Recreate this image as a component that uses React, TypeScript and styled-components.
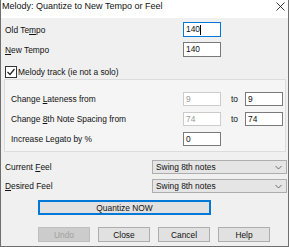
import React from 'react';
import styled, { createGlobalStyle } from 'styled-components';

const GlobalStyle = createGlobalStyle`
  html, body {
    margin: 0;
    padding: 0;
    background: #f0f0f0;
  }
  body {
    font-family: 'Liberation Sans', Arial, sans-serif;
    font-size: 8.4px;
    color: #111;
  }
`;

const Window = styled.div`
  width: 289px;
  height: 247px;
  box-sizing: border-box;
  border: 1px solid #6f6f6f;
  border-top: none;
  background: #f0f0f0;
  display: flex;
  flex-direction: column;
  overflow: hidden;
`;

const TitleBar = styled.div`
  height: 18px;
  flex: none;
  background: #fff;
  display: flex;
  align-items: center;
  justify-content: space-between;
  padding: 0 3px 6px 1px;
  box-sizing: border-box;

  .title {
    font-size: 9px;
    line-height: 12px;
  }
`;

const Body = styled.div`
  flex: 1;
  padding: 4px 2px 0 3px;
  display: flex;
  flex-direction: column;
`;

const FieldRow = styled.div<{ $gap?: number }>`
  display: grid;
  grid-template-columns: 178px 38px;
  align-items: center;
  height: 15px;
  margin-left: 1px;
  margin-bottom: ${({ $gap }) => $gap ?? 0}px;
`;

const Label = styled.span`
  white-space: nowrap;
`;

const U = styled.span`
  text-decoration: underline;
  text-underline-offset: 1px;
`;

const TextBox = styled.div<{ $focus?: boolean; $disabled?: boolean }>`
  box-sizing: border-box;
  height: 100%;
  background: #fff;
  border: 1px solid
    ${({ $focus, $disabled }) =>
      $focus ? '#0078d7' : $disabled ? '#cccccc' : '#7a7a7a'};
  color: ${({ $disabled }) => ($disabled ? '#9a9a9a' : '#111')};
  display: flex;
  align-items: center;
  padding-left: 2px;
  line-height: 1;
`;

const Caret = styled.span`
  display: inline-block;
  width: 1px;
  height: 10px;
  background: #000;
  margin-left: 0.5px;
`;

const CheckRow = styled.label`
  display: flex;
  align-items: center;
  gap: 1px;
  height: 13px;
  margin: 8px 0 1px 1px;
`;

const Group = styled.div`
  box-sizing: border-box;
  width: 282px;
  height: 73px;
  border: 1px solid #dcdcdc;
  background: #f5f5f5;
  padding: 12px 0 0 6px;
  display: flex;
  flex-direction: column;
  gap: 6px;
`;

const GroupRow = styled.div`
  display: grid;
  grid-template-columns: 172px 38px 24px 38px;
  align-items: center;
  height: 14px;

  .to {
    padding-left: 10px;
  }
`;

const SelectRow = styled.div<{ $top: number }>`
  display: grid;
  grid-template-columns: 147px 135px;
  align-items: center;
  height: 14px;
  margin: ${({ $top }) => $top}px 0 0 1px;
`;

const Select = styled.div`
  box-sizing: border-box;
  height: 100%;
  background: #e5e5e5;
  border: 1px solid #adadad;
  display: flex;
  align-items: center;
  justify-content: space-between;
  padding: 0 4px 0 3px;
`;

const Button = styled.div<{ $width: number; $default?: boolean; $disabled?: boolean }>`
  box-sizing: border-box;
  width: ${({ $width }) => $width}px;
  height: 15px;
  background: ${({ $disabled }) => ($disabled ? '#cccccc' : '#e1e1e1')};
  border: 1px solid
    ${({ $default, $disabled }) =>
      $default ? '#0078d7' : $disabled ? '#bfbfbf' : '#adadad'};
  box-shadow: ${({ $default }) => ($default ? 'inset 0 0 0 1px #0078d7' : 'none')};
  color: ${({ $disabled }) => ($disabled ? '#a0a0a0' : '#111')};
  display: flex;
  align-items: center;
  justify-content: center;
`;

const ButtonBar = styled.div<{ $top: number }>`
  display: flex;
  gap: 8px;
  padding-left: 34px;
  margin-top: ${({ $top }) => $top}px;
`;

const CloseIcon = () => (
  <svg width="9" height="9" viewBox="0 0 9 9">
    <path d="M0.5 0.5 L8.5 8.5 M8.5 0.5 L0.5 8.5" stroke="#222" strokeWidth="0.9" fill="none" />
  </svg>
);

const CheckBox = () => (
  <svg width="12" height="12" viewBox="0 0 12 12">
    <rect x="0.5" y="0.5" width="11" height="11" fill="#fff" stroke="#333" />
    <path d="M2.5 6 L5 8.5 L9.5 3" stroke="#222" strokeWidth="1.2" fill="none" />
  </svg>
);

const Chevron = () => (
  <svg width="7" height="5" viewBox="0 0 7 5">
    <path d="M0.5 1 L3.5 4 L6.5 1" stroke="#606060" strokeWidth="0.9" fill="none" />
  </svg>
);

const App = () => (
  <>
    <GlobalStyle />
    <Window>
      <TitleBar>
        <span className="title">Melody: Quantize to New Tempo or Feel</span>
        <CloseIcon />
      </TitleBar>
      <Body>
        <FieldRow $gap={5}>
          <Label>
            Old Te<U>m</U>po
          </Label>
          <TextBox $focus>
            140
            <Caret />
          </TextBox>
        </FieldRow>
        <FieldRow>
          <Label>
            <U>N</U>ew Tempo
          </Label>
          <TextBox>140</TextBox>
        </FieldRow>
        <CheckRow>
          <CheckBox />
          <Label>Melody track (ie not a solo)</Label>
        </CheckRow>
        <Group>
          <GroupRow>
            <Label>
              Change <U>L</U>ateness from
            </Label>
            <TextBox $disabled>9</TextBox>
            <Label className="to">to</Label>
            <TextBox>9</TextBox>
          </GroupRow>
          <GroupRow>
            <Label>
              Change <U>8</U>th Note Spacing from
            </Label>
            <TextBox $disabled>74</TextBox>
            <Label className="to">to</Label>
            <TextBox>74</TextBox>
          </GroupRow>
          <GroupRow>
            <Label>Increase Legato by %</Label>
            <TextBox>0</TextBox>
          </GroupRow>
        </Group>
        <SelectRow $top={8}>
          <Label>
            Current <U>F</U>eel
          </Label>
          <Select>
            <span>Swing 8th notes</span>
            <Chevron />
          </Select>
        </SelectRow>
        <SelectRow $top={5}>
          <Label>
            <U>D</U>esired Feel
          </Label>
          <Select>
            <span>Swing 8th notes</span>
            <Chevron />
          </Select>
        </SelectRow>
        <ButtonBar $top={7}>
          <Button $width={173} $default>
            Quantize NOW
          </Button>
        </ButtonBar>
        <ButtonBar $top={12}>
          <Button $width={52} $disabled>
            Undo
          </Button>
          <Button $width={52}>Close</Button>
          <Button $width={52}>Cancel</Button>
          <Button $width={52}>Help</Button>
        </ButtonBar>
      </Body>
    </Window>
  </>
);

export default App;
